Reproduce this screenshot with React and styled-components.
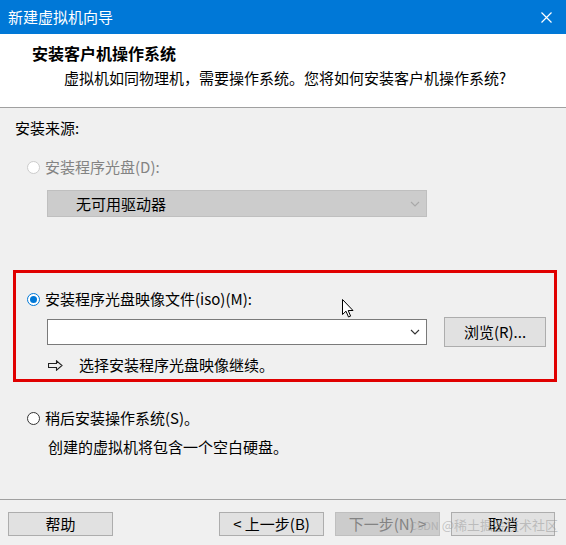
import React from 'react';
import styled, { createGlobalStyle, css } from 'styled-components';

const GlobalStyle = createGlobalStyle`
  html, body {
    margin: 0;
    padding: 0;
    background: #f0f0f0;
  }
  * {
    box-sizing: border-box;
  }
`;

const Window = styled.div`
  position: relative;
  width: 566px;
  height: 545px;
  display: flex;
  flex-direction: column;
  background: #f0f0f0;
  font-family: "Noto Sans CJK SC", "Noto Sans", sans-serif;
  font-size: 15px;
  color: #000;
  overflow: hidden;
`;

const TitleBar = styled.div`
  height: 34px;
  flex-shrink: 0;
  background: #0078d7;
  color: #fff;
  display: flex;
  align-items: center;
  justify-content: space-between;
  padding: 0 14px 0 8px;
  line-height: 20px;
`;

const Header = styled.div`
  height: 74px;
  flex-shrink: 0;
  background: #fff;
  border-bottom: 1px solid #a0a0a0;
  padding: 9px 0 0 32px;
  display: flex;
  flex-direction: column;
`;

const Heading = styled.div`
  font-size: 16px;
  font-weight: 700;
  line-height: 20px;
`;

const SubHeading = styled.div`
  margin-top: 5px;
  padding-left: 32px;
  line-height: 20px;
`;

const Body = styled.div`
  flex: 1;
  display: flex;
  flex-direction: column;
  padding: 10px 9px 0 13px;
`;

const SourceLabel = styled.div`
  line-height: 20px;
  padding-left: 2px;
`;

const OptionRow = styled.label`
  display: flex;
  align-items: center;
  gap: 5px;
  line-height: 20px;
  margin-top: ${(p) => p.$top || 0}px;
  padding-left: ${(p) => p.$indent || 14}px;
  color: ${(p) => (p.$disabled ? '#838383' : '#000')};
`;

const Radio = styled.span`
  width: 13px;
  height: 13px;
  border-radius: 50%;
  flex-shrink: 0;
  background: #fff;
  border: 1px solid ${(p) => (p.$disabled ? '#cccccc' : '#333')};
  display: flex;
  align-items: center;
  justify-content: center;
  ${(p) =>
    p.$checked &&
    css`
      border-color: #0078d7;
      &::after {
        content: '';
        width: 7px;
        height: 7px;
        border-radius: 50%;
        background: #0078d7;
      }
    `}
`;

const Combo = styled.div`
  width: 380px;
  height: ${(p) => (p.$disabled ? 27 : 26)}px;
  display: flex;
  align-items: center;
  justify-content: space-between;
  padding: 0 6px 0 28px;
  background: ${(p) => (p.$disabled ? '#cccccc' : '#fff')};
  border: 1px solid ${(p) => (p.$disabled ? '#bfbfbf' : '#7a7a7a')};
  color: #000;
  line-height: 20px;
`;

const DriveCombo = styled(Combo)`
  margin: 13px 0 0 34px;
`;

const Highlight = styled.div`
  margin-top: 53px;
  width: 544px;
  height: 112px;
  border: 3px solid #e00000;
  display: flex;
  flex-direction: column;
  padding: 16px 0 0 0;
`;

const FileRow = styled.div`
  display: flex;
  align-items: center;
  gap: 17px;
  margin-top: 8px;
  padding-left: 31px;
`;

const Button = styled.button`
  width: ${(p) => p.$w || 105}px;
  height: ${(p) => p.$h || 24}px;
  padding: 0;
  font-family: inherit;
  font-size: 15px;
  line-height: 20px;
  background: ${(p) => (p.$disabled ? '#cccccc' : '#e1e1e1')};
  border: 1px solid ${(p) => (p.$disabled ? '#bfbfbf' : '#adadad')};
  color: ${(p) => (p.$disabled ? '#838383' : '#000')};
`;

const HintRow = styled.div`
  display: flex;
  align-items: center;
  gap: 16px;
  line-height: 20px;
  margin-top: 8px;
  padding-left: 32px;
`;

const Description = styled.div`
  margin-top: 9px;
  padding-left: 35px;
  line-height: 20px;
`;

const Footer = styled.div`
  height: 46px;
  flex-shrink: 0;
  border-top: 1px solid #a0a0a0;
  display: flex;
  align-items: flex-start;
  padding: 12px 0 0 8px;
`;

const Spacer = styled.div`
  flex: 1;
`;

const ButtonGroup = styled.div`
  display: flex;
  gap: 11px;
  padding-right: 11px;
`;

const Watermark = styled.div`
  position: absolute;
  left: 410px;
  top: 516px;
  font-size: 13px;
  line-height: 18px;
  color: rgba(150, 150, 150, 0.5);
  white-space: nowrap;
  pointer-events: none;
  & small {
    font-size: 11px;
  }
`;

const Cursor = styled.svg`
  position: absolute;
  left: 342px;
  top: 299px;
`;

const Chevron = ({ color }) => (
  <svg width="10" height="6" viewBox="0 0 10 6">
    <path d="M1 1 L5 5 L9 1" fill="none" stroke={color} strokeWidth="1.1" />
  </svg>
);

const CloseIcon = () => (
  <svg width="11" height="11" viewBox="0 0 11 11">
    <path d="M0.5 0.5 L10.5 10.5 M10.5 0.5 L0.5 10.5" stroke="#fff" strokeWidth="1.2" />
  </svg>
);

const HintArrow = () => (
  <svg width="15" height="11" viewBox="0 0 15 11">
    <path
      d="M0.5 3.5 H8.5 V0.8 L14 5.5 L8.5 10.2 V7.5 H0.5 Z"
      fill="none"
      stroke="#222"
      strokeWidth="1.1"
      strokeLinejoin="miter"
    />
  </svg>
);

export default function App() {
  return (
    <>
      <GlobalStyle />
      <Window>
        <TitleBar>
          <span>新建虚拟机向导</span>
          <CloseIcon />
        </TitleBar>
        <Header>
          <Heading>安装客户机操作系统</Heading>
          <SubHeading>虚拟机如同物理机，需要操作系统。您将如何安装客户机操作系统?</SubHeading>
        </Header>
        <Body>
          <SourceLabel>安装来源:</SourceLabel>
          <OptionRow $top={19} $disabled>
            <Radio $disabled />
            安装程序光盘(D):
          </OptionRow>
          <DriveCombo $disabled>
            <span>无可用驱动器</span>
            <Chevron color="#a8a8a8" />
          </DriveCombo>
          <Highlight>
            <OptionRow $indent={11}>
              <Radio $checked />
              安装程序光盘映像文件(iso)(M):
            </OptionRow>
            <FileRow>
              <Combo>
                <span />
                <Chevron color="#333" />
              </Combo>
              <Button $w={102} $h={30}>浏览(R)...</Button>
            </FileRow>
            <HintRow>
              <HintArrow />
              <span>选择安装程序光盘映像继续。</span>
            </HintRow>
          </Highlight>
          <OptionRow $top={26}>
            <Radio />
            稍后安装操作系统(S)。
          </OptionRow>
          <Description>创建的虚拟机将包含一个空白硬盘。</Description>
        </Body>
        <Footer>
          <Button>帮助</Button>
          <Spacer />
          <ButtonGroup>
            <Button>&lt; 上一步(B)</Button>
            <Button $disabled>下一步(N) &gt;</Button>
            <Button $w={104}>取消</Button>
          </ButtonGroup>
        </Footer>
        <Watermark>
          <small>CSDN</small> @稀土掘金技术社区
        </Watermark>
        <Cursor width="12" height="19" viewBox="0 0 12 19">
          <path
            d="M0.5 0.5 V15.5 L4 12.2 L6.5 18 L8.6 17.1 L6.2 11.5 H11 Z"
            fill="#fff"
            stroke="#000"
            strokeWidth="1"
            strokeLinejoin="round"
          />
        </Cursor>
      </Window>
    </>
  );
}
